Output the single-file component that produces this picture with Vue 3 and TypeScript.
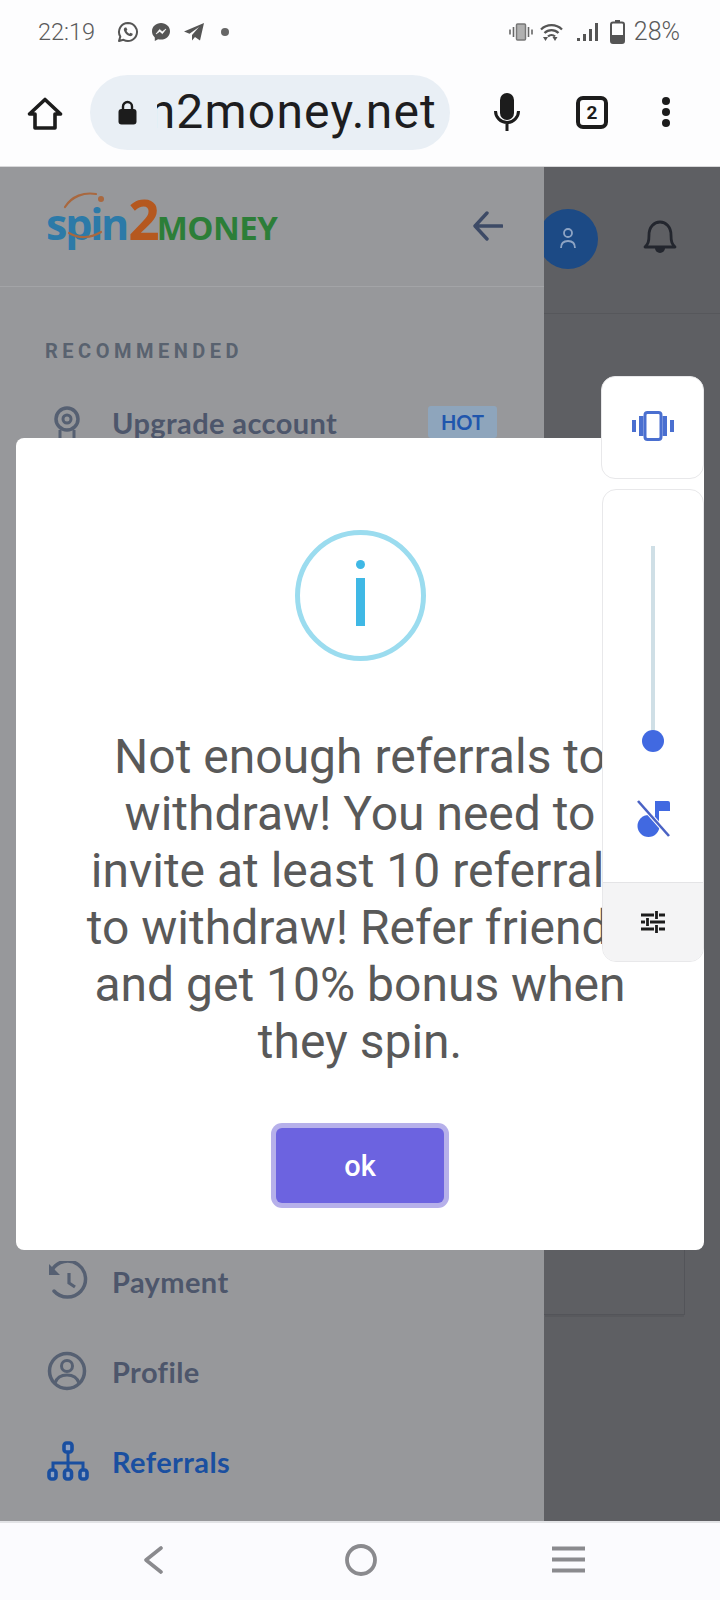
<template>
  <div class="phone">
    <header class="status">
      <span class="time">22:19</span>
      <svg class="st-whatsapp" viewBox="0 0 22 22" width="22" height="22">
        <path d="M11 2a9 9 0 0 0-7.700 13.600L2 20l4.500-1.200A9 9 0 1 0 11 2z" fill="none" stroke="#555" stroke-width="2" stroke-linejoin="round" />
        <path d="M8 6.500c-1 .6-1.400 1.600-1 3 .7 2.500 3 4.800 5.500 5.500 1.400.4 2.500 0 3-1l.2-1.200-2.300-1.100-.9 1c-1.200-.4-2.500-1.700-3-3l.9-1L9.300 6.500z" fill="#555" />
      </svg>
      <svg class="st-messenger" viewBox="0 0 20 20" width="20" height="20">
        <path d="M10 1C4.900 1 1 4.600 1 9.300c0 2.500 1 4.600 2.800 6.100V19l3.300-1.800c.9.300 1.900.4 2.900.4 5.100 0 9-3.600 9-8.300S15.100 1 10 1z" fill="#555" />
        <path d="M5 12l3.600-4.600 2.600 2.300L15 7l-3.600 4.700-2.600-2.300z" fill="#fff" stroke="#fff" stroke-width=".6" />
      </svg>
      <svg class="st-telegram" viewBox="0 0 20 20" width="20" height="20">
        <path d="M20 1L0 9.500l5.500 2.200L15 5l-7 8v5.500l3-3.500 5 3.500z" fill="#555" />
      </svg>
      <span class="st-dot"></span>
      <span class="grow"></span>
      <svg class="st-vibrate" viewBox="0 0 24 18" width="24" height="18">
        <rect x="7.500" y="1" width="9" height="16" rx="1" fill="#b0b0b0" stroke="#777" stroke-width="1.500" />
        <path d="M4.500 4v10M1 6.500v5M19.500 4v10M23 6.500v5" stroke="#666" stroke-width="1.600" />
      </svg>
      <svg class="st-wifi" viewBox="0 0 23 20" width="23" height="20">
        <path d="M1 7.500a15 15 0 0 1 21 0M4.500 11a10 10 0 0 1 14 0M8 14.500a5 5 0 0 1 7 0" fill="none" stroke="#555" stroke-width="2.300" />
        <path d="M3 15h5l-2.500 4zM15 19l2.500-4h-5z" fill="#555" />
      </svg>
      <svg class="st-signal" viewBox="0 0 21 18" width="21" height="18">
        <path d="M0 15h3v3H0zM6 11h3v7H6zM12 6h3v12h-3zM18 0h3v18h-3z" fill="#555" />
      </svg>
      <svg class="st-battery" viewBox="0 0 15 24" width="15" height="24">
        <path d="M5 0h5v2H5z" fill="#555" />
        <rect x="1" y="2.500" width="13" height="20.500" rx="2" fill="#fff" stroke="#555" stroke-width="2" />
        <rect x="1" y="15" width="13" height="8" rx="1" fill="#555" />
      </svg>
      <span class="percent">28%</span>
    </header>

    <div class="browser">
      <svg class="ico-home" viewBox="0 0 36 33" width="36" height="33">
        <path d="M18 2.500L33.500 17H28v14H8V17H2.500z" fill="none" stroke="#1c1c1c" stroke-width="3.600" stroke-linejoin="round" />
      </svg>
      <div class="pill">
        <svg class="ico-lock" viewBox="0 0 19 25" width="19" height="25">
          <path d="M5 10V6.500a4.500 4.500 0 0 1 9 0V10" fill="none" stroke="#1c1c1c" stroke-width="2.400" />
          <rect x="0.500" y="9" width="18" height="15.500" rx="3" fill="#1c1c1c" />
        </svg>
        <div class="url"><span>spin2money.net</span></div>
      </div>
      <svg class="ico-mic" viewBox="0 0 26 38" width="26" height="38">
        <rect x="6" y="0" width="14" height="27" rx="7" fill="#1c1c1c" />
        <path d="M1.500 18a11.500 11.500 0 0 0 23 0M13 29v9" fill="none" stroke="#1c1c1c" stroke-width="3" />
      </svg>
      <div class="tabs">2</div>
      <div class="dots"><i></i><i></i><i></i></div>
    </div>

    <main class="page">
      <aside class="drawer">
        <div class="drawer-head">
          <div class="logo">
            <svg class="swoosh" viewBox="0 0 70 50" width="70" height="50">
              <path d="M11 16C18 5 30 1 42 3M15 42c10 6 22 5 32-1" fill="none" stroke="#a9683f" stroke-width="2.200" stroke-linecap="round" />
              <circle cx="47" cy="8" r="3" fill="#a9683f" />
            </svg>
            <span class="l-spin">spin</span><span class="l-two">2</span><span class="l-money">MONEY</span>
          </div>
          <svg class="ico-back" viewBox="0 0 30 30" width="30" height="30">
            <path d="M29 15H3M14 2L2 15l12 13" fill="none" stroke="#3d4a66" stroke-width="3.400" stroke-linecap="round" stroke-linejoin="round" />
          </svg>
        </div>

        <div class="label">RECOMMENDED</div>
        <div class="item upgrade">
          <svg class="ico-medal" viewBox="0 0 26 44" width="26" height="44">
            <circle cx="13" cy="13" r="11" fill="none" stroke="#566072" stroke-width="3.500" />
            <circle cx="13" cy="13" r="4" fill="none" stroke="#566072" stroke-width="3" />
            <path d="M6 24v18l7-5 7 5V24" fill="none" stroke="#566072" stroke-width="3" />
          </svg>
          <span class="item-text">Upgrade account</span>
          <span class="hot">HOT</span>
        </div>

        <nav class="menu-bottom">
          <a class="item">
            <span class="item-icon">
              <svg viewBox="0 0 42 40" width="42" height="40">
                <path d="M5 9A18 18 0 1 1 7 30" fill="none" stroke="#566072" stroke-width="3.500" stroke-linecap="round" />
                <path d="M2 3v11h11z" fill="#566072" />
                <path d="M22 12v10l6 4" fill="none" stroke="#566072" stroke-width="3.200" />
              </svg>
            </span>
            <span class="item-text">Payment</span>
          </a>
          <a class="item">
            <span class="item-icon">
              <svg viewBox="0 0 40 40" width="40" height="40">
                <circle cx="20" cy="20" r="17.500" fill="none" stroke="#566072" stroke-width="3.500" />
                <circle cx="20" cy="15" r="5.500" fill="none" stroke="#566072" stroke-width="3" />
                <path d="M8 32c2-6 7-8 12-8s10 2 12 8" fill="none" stroke="#566072" stroke-width="3" />
              </svg>
            </span>
            <span class="item-text">Profile</span>
          </a>
          <a class="item active">
            <span class="item-icon">
              <svg viewBox="0 0 42 40" width="42" height="40">
                <path d="M21 10v20M6 30v-8h30v8" fill="none" stroke="#1a4fa0" stroke-width="3" />
                <g fill="#8fa3c4" stroke="#1a4fa0" stroke-width="3.600">
                  <rect x="17" y="2" width="8" height="9" rx="2.500" />
                  <rect x="2" y="29" width="7" height="9" rx="2.500" />
                  <rect x="17.500" y="29" width="7" height="9" rx="2.500" />
                  <rect x="33" y="29" width="7" height="9" rx="2.500" />
                </g>
              </svg>
            </span>
            <span class="item-text">Referrals</span>
          </a>
        </nav>
      </aside>

      <section class="content">
        <div class="content-head">
          <div class="avatar">
            <svg viewBox="0 0 18 24" width="18" height="24">
              <circle cx="9" cy="6" r="4" fill="none" stroke="#8ea4c4" stroke-width="1.800" />
              <path d="M2 21c0-5 3-7 7-7s7 2 7 7" fill="none" stroke="#8ea4c4" stroke-width="1.800" />
            </svg>
          </div>
          <svg class="ico-bell" viewBox="0 0 34 34" width="34" height="34">
            <path d="M2 27c3-3 4-5 4-12C6 7 11 2 17 2s11 5 11 13c0 7 1 9 4 12z" fill="none" stroke="#23262e" stroke-width="2.800" stroke-linejoin="round" />
            <path d="M12 28a5 5 0 0 0 10 0z" fill="#23262e" />
          </svg>
        </div>
        <div class="content-body">
          <div class="card"></div>
        </div>
      </section>

      <!-- sweetalert style dialog, sits over the page -->
      <div class="modal">
        <div class="info-ring"><span class="info-dot"></span><span class="info-bar"></span></div>
        <p class="message">Not enough referrals to withdraw! You need to invite at least 10 referrals to withdraw! Refer friends and get 10% bonus when they spin.</p>
        <button class="ok">ok</button>
      </div>
    </main>

    <!-- samsung sound panel floats on everything -->
    <div class="volume">
      <div class="vol-card vibrate">
        <svg viewBox="0 0 42 30" width="42" height="30">
          <rect x="13" y="1.500" width="16" height="27" rx="2.500" fill="none" stroke="#4a6fd0" stroke-width="3" />
          <path d="M7 5h4.500v20H7zM0 9h4v12H0zM30.500 5H35v20h-4.500zM38 9h4v12h-4z" fill="#4a6fd0" />
        </svg>
      </div>
      <div class="vol-card sound">
        <div class="slider"><span class="knob"></span></div>
        <svg class="ico-note" viewBox="0 0 33 37" width="33" height="37">
          <circle cx="11.500" cy="26" r="11" fill="#4169e1" />
          <path d="M18 1h13a2 2 0 0 1 2 2v8H22v15h-4z" fill="#4169e1" />
          <path d="M1 1l31 35" stroke="#fff" stroke-width="4.500" />
          <path d="M1 1l31 35" stroke="#4a62c4" stroke-width="2.600" />
        </svg>
        <div class="vol-foot">
          <svg viewBox="0 0 24 22" width="24" height="22">
            <path d="M0 4h13M18 4h6M0 11h4M9 11h15M0 18h13M18 18h6M15.500 0v8M6.500 7v8M15.500 14v8" fill="none" stroke="#1c1c1c" stroke-width="2.800" />
          </svg>
        </div>
      </div>
    </div>

    <footer class="softkeys">
      <svg viewBox="0 0 20 28" width="20" height="28">
        <path d="M18 2L3 14l15 12" fill="none" stroke="#8a8a8e" stroke-width="3.600" stroke-linecap="round" stroke-linejoin="round" />
      </svg>
      <svg class="key-home" viewBox="0 0 32 32" width="32" height="32">
        <circle cx="16" cy="16" r="14" fill="none" stroke="#8a8a8e" stroke-width="3.800" />
      </svg>
      <svg class="key-menu" viewBox="0 0 33 27" width="33" height="27">
        <path d="M0 2.500h33M0 13.500h33M0 24.500h33" stroke="#8a8a8e" stroke-width="4" />
      </svg>
    </footer>
  </div>
</template>

<script setup lang="ts">
// static screen, nothing to wire up
</script>

<style>
html,
body {
  margin: 0;
  background: #fff;
}
</style>

<style scoped>
.phone {
  position: relative;
  width: 720px;
  height: 1600px;
  display: flex;
  flex-direction: column;
  overflow: hidden;
  background: #fff;
  font-family: Roboto, "Liberation Sans", sans-serif;
}

.status {
  height: 60px;
  flex-shrink: 0;
  display: flex;
  align-items: center;
  padding: 3px 40px 0 38px;
  box-sizing: border-box;
  color: #5a5a5a;
  background: #fdfdfe;
}
.time {
  width: 56px;
  font-size: 23.500px;
  font-weight: 300;
}
.st-whatsapp {
  margin-left: 23px;
}
.st-messenger {
  margin-left: 12px;
}
.st-telegram {
  margin-left: 13px;
}
.st-dot {
  width: 8px;
  height: 8px;
  margin-left: 17px;
  border-radius: 50%;
  background: #666;
}
.grow {
  flex: 1;
}
.st-wifi {
  margin-left: 7px;
}
.st-signal {
  margin-left: 14px;
}
.st-battery {
  margin-left: 12px;
}
.percent {
  margin-left: 9px;
  font-size: 25px;
  font-weight: 300;
}

.browser {
  height: 107px;
  flex-shrink: 0;
  display: flex;
  align-items: center;
  padding: 0 0 2px 27px;
  box-sizing: border-box;
  background: #fdfdfe;
  border-bottom: 1px solid #d8d8da;
}
.ico-home {
  margin-top: 3px;
}
.pill {
  width: 360px;
  height: 75px;
  margin-left: 27px;
  border-radius: 38px;
  background: #e9eff5;
  display: flex;
  align-items: center;
  box-sizing: border-box;
  padding: 0 13px 0 28px;
}
.url {
  flex: 1;
  margin-left: 20px;
  overflow: hidden;
  display: flex;
  justify-content: flex-end;
  white-space: nowrap;
  font-size: 48px;
  letter-spacing: 1.2px;
  line-height: 60px;
  color: #1d1d20;
}
.url span {
  flex-shrink: 0;
}
.ico-mic {
  margin-left: 44px;
}
.tabs {
  width: 32px;
  height: 33px;
  margin-left: 56px;
  box-sizing: border-box;
  border: 4px solid #1c1c1c;
  border-radius: 7px;
  text-align: center;
  font-size: 19px;
  font-weight: 700;
  line-height: 25px;
  color: #1c1c1c;
}
.dots {
  margin-left: 54px;
  display: flex;
  flex-direction: column;
  gap: 3px;
}
.dots i {
  width: 8px;
  height: 8px;
  border-radius: 50%;
  background: #1c1c1c;
}

.page {
  flex: 1;
  display: flex;
  min-height: 0;
  background: #5e5f63;
}
.drawer {
  position: relative;
  z-index: 1;
  width: 544px;
  flex-shrink: 0;
  display: flex;
  flex-direction: column;
  background: #97989b;
  font-family: Lato, "Noto Sans", sans-serif;
}
.drawer-head {
  height: 120px;
  flex-shrink: 0;
  box-sizing: border-box;
  border-bottom: 1px solid #a3a4a7;
  display: flex;
  align-items: center;
  justify-content: space-between;
  padding: 0 41px 2px 46px;
}
.logo {
  position: relative;
  margin-bottom: 14px;
  display: flex;
  align-items: baseline;
  font-family: "Open Sans", sans-serif;
  font-weight: 700;
  white-space: nowrap;
}
.swoosh {
  position: absolute;
  left: 8px;
  top: 10px;
}
.l-spin {
  font-size: 43px;
  letter-spacing: -2.2px;
  color: #2c7aa8;
}
.l-two {
  font-size: 55px;
  letter-spacing: -3px;
  margin-left: 1px;
  color: #b5581f;
}
.l-money {
  font-size: 33px;
  letter-spacing: -0.5px;
  color: #2c7e38;
}
.label {
  margin: 53px 0 0 45px;
  font-family: Roboto, sans-serif;
  font-size: 20px;
  line-height: 22px;
  font-weight: 700;
  letter-spacing: 4.5px;
  color: #59626f;
}
.item {
  height: 90px;
  flex-shrink: 0;
  display: flex;
  align-items: center;
  padding-left: 47px;
  color: #4d566b;
}
.item-icon {
  width: 65px;
  display: flex;
}
.item-text {
  font-size: 29px;
  font-weight: 700;
  letter-spacing: 0.4px;
}
.upgrade {
  margin-top: 44px;
  padding-left: 54px;
  height: 70px;
  align-items: flex-start;
  box-sizing: border-box;
}
.upgrade .item-text {
  margin-left: 32px;
  line-height: 34px;
}
.hot {
  margin-left: auto;
  margin-right: 47px;
  width: 69px;
  height: 32px;
  border-radius: 3px;
  background: #8ea5bc;
  color: #1f56ad;
  font-size: 20px;
  font-weight: 700;
  line-height: 32px;
  text-align: center;
}
.menu-bottom {
  margin-top: auto;
  padding-bottom: 15px;
  display: flex;
  flex-direction: column;
}
.active {
  color: #1a4fa0;
}

.content {
  flex: 1;
  min-width: 0;
  display: flex;
  flex-direction: column;
}
.content-head {
  height: 147px;
  flex-shrink: 0;
  box-sizing: border-box;
  border-bottom: 1px solid #56575b;
  display: flex;
  align-items: center;
  justify-content: flex-end;
  gap: 45px;
  padding: 0 43px 2px 0;
}
.avatar {
  width: 60px;
  height: 60px;
  flex-shrink: 0;
  border-radius: 50%;
  background: #1c4a85;
  display: flex;
  align-items: center;
  justify-content: center;
}
.ico-bell {
  flex-shrink: 0;
  margin-bottom: 4px;
}
.content-body {
  flex: 1;
  display: flex;
  padding: 70px 35px 206px 0;
}
.card {
  flex: 1;
  border-right: 1px solid #535459;
  border-bottom: 1px solid #535459;
  box-shadow: 0 3px 0 -1px #58595d;
}

.modal {
  position: absolute;
  z-index: 2;
  left: 16px;
  top: 438px;
  width: 688px;
  height: 812px;
  box-sizing: border-box;
  padding-top: 92px;
  border-radius: 8px;
  background: #fff;
  display: flex;
  flex-direction: column;
  align-items: center;
}
.info-ring {
  position: relative;
  width: 131px;
  height: 131px;
  flex-shrink: 0;
  box-sizing: border-box;
  border: 5px solid #9bdcef;
  border-radius: 50%;
}
.info-dot {
  position: absolute;
  left: 56px;
  top: 25px;
  width: 9px;
  height: 9px;
  border-radius: 50%;
  background: #3fb8e5;
}
.info-bar {
  position: absolute;
  left: 56px;
  top: 43px;
  width: 9px;
  height: 48px;
  background: #3fb8e5;
}
.message {
  width: 575px;
  margin: 67px 0 0;
  text-align: center;
  font-size: 48px;
  line-height: 57px;
  color: #595959;
}
.ok {
  width: 168px;
  height: 75px;
  margin-top: 58px;
  border: none;
  border-radius: 6px;
  background: #6c63e0;
  box-shadow: 0 0 0 5px #b6b0ea;
  color: #fff;
  font-family: Roboto, sans-serif;
  font-size: 29px;
  font-weight: 500;
}

.volume {
  position: absolute;
  z-index: 3;
  left: 601px;
  top: 376px;
  width: 103px;
  display: flex;
  flex-direction: column;
  gap: 10px;
}
.vol-card {
  box-sizing: border-box;
  border: 1px solid #e8e8ea;
  border-radius: 14px;
  background: #fff;
  overflow: hidden;
}
.vibrate {
  height: 103px;
  display: flex;
  align-items: center;
  justify-content: center;
  padding-bottom: 3px;
}
.sound {
  height: 473px;
  margin-left: 1px;
  display: flex;
  flex-direction: column;
  align-items: center;
  padding-top: 56px;
}
.slider {
  position: relative;
  width: 4px;
  height: 185px;
  background: #cfdfe6;
}
.knob {
  position: absolute;
  left: -9px;
  top: 184px;
  width: 22px;
  height: 22px;
  border-radius: 50%;
  background: #4169e1;
}
.ico-note {
  margin-top: 69px;
}
.vol-foot {
  margin-top: auto;
  width: 100%;
  height: 78px;
  flex-shrink: 0;
  border-top: 1px solid #e4e4e6;
  background: #f4f4f5;
  display: flex;
  align-items: center;
  justify-content: center;
}

.softkeys {
  height: 79px;
  flex-shrink: 0;
  box-sizing: border-box;
  border-top: 2px solid #e2e3e6;
  background: #fbfbfe;
  display: flex;
  align-items: center;
  padding: 0 0 4px 143px;
}
.key-home {
  margin-left: 182px;
}
.key-menu {
  margin-left: 175px;
}
</style>
